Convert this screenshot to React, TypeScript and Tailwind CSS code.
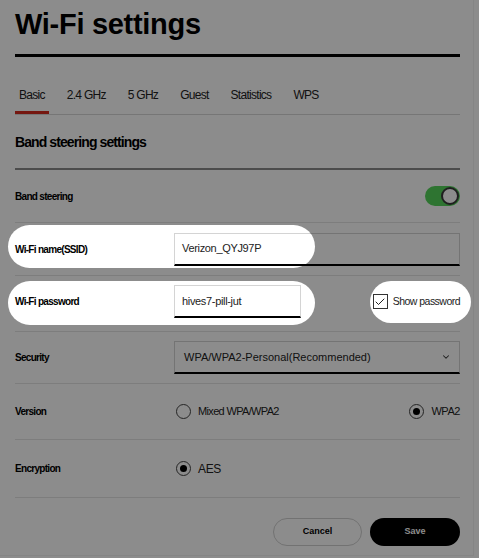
import React from 'react';
import { ChevronDown, Check } from 'lucide-react';

const font = { fontFamily: '"Liberation Sans", Arial, sans-serif' };

function Radio({ checked }: { checked?: boolean }) {
  return (
    <span className="flex h-[15px] w-[15px] shrink-0 items-center justify-center rounded-full border border-[#444]">
      {checked && <span className="h-[7px] w-[7px] rounded-full bg-black" />}
    </span>
  );
}

function Label({ children }: { children: React.ReactNode }) {
  return <div className="w-[159px] shrink-0 text-[10px] font-bold tracking-[-0.07em] text-black">{children}</div>;
}

export default function App() {
  const tabs = ['Basic', '2.4 GHz', '5 GHz', 'Guest', 'Statistics', 'WPS'];

  return (
    <div className="relative h-[558px] w-[479px] overflow-hidden bg-white" style={font}>
      <div className="h-[556px] w-[474px] border-r border-b border-[#f2f2f2] pl-[15px] pr-[13px]">
        <h1 className="pt-[7px] text-[29px] leading-[34px] font-bold tracking-[-0.01em] text-black">Wi-Fi settings</h1>
        <div className="mt-[13px] h-[3px] bg-black" />

        {/* Tabs */}
        <div className="mt-[31px] flex gap-[14px] border-b border-[#d8d8d8]">
          {tabs.map((t, i) => (
            <div
              key={t}
              className={`px-1 pb-[9px] text-[12px] leading-[14px] tracking-[-0.06em] text-[#222] ${i === 0 ? 'border-b-[3px] border-[#d52b1e]' : 'border-b-[3px] border-transparent'}`}
            >
              {t}
            </div>
          ))}
        </div>

        <h2 className="mt-[19px] text-[14px] leading-[16px] font-bold tracking-[-0.065em] text-black">Band steering settings</h2>
        <div className="mt-[18px] h-[2px] bg-[#8a8a8a]" />

        {/* Band steering */}
        <div className="flex h-[53px] items-center justify-between border-b border-[#e4e4e4]">
          <Label>Band steering</Label>
          <div className="flex h-[20px] w-[35px] items-center justify-end rounded-full bg-[#54d35a] pr-[1px]">
            <span className="h-[18px] w-[18px] rounded-full border-2 border-[#3a3a3a] bg-white" />
          </div>
        </div>

        {/* SSID */}
        <div className="flex h-[53px] items-center border-b border-[#e4e4e4]">
          <Label>Wi-Fi name(SSID)</Label>
          <div className="flex h-[33px] flex-1 items-center border border-[#d4d4d4] border-b-2 border-b-black px-[7px] text-[11px] tracking-[-0.03em] text-[#222]">
            Verizon_QYJ97P
          </div>
        </div>

        {/* Password */}
        <div className="flex h-[56px] items-center border-b border-[#e4e4e4] pb-[4px]">
          <Label>Wi-Fi password</Label>
          <div className="flex h-[33px] w-[127px] items-center border border-[#d4d4d4] border-b-2 border-b-black px-[7px] text-[11px] tracking-[-0.03em] text-[#222]">
            hives7-pill-jut
          </div>
          <div className="ml-auto flex items-center gap-[5px]">
            <span className="flex h-[15px] w-[15px] items-center justify-center border border-[#333] bg-white">
              <Check className="h-[12px] w-[12px] text-black" strokeWidth={1.75} />
            </span>
            <span className="text-[10.5px] tracking-[-0.05em] text-[#222]">Show password</span>
          </div>
        </div>

        {/* Security */}
        <div className="flex h-[52px] items-center border-b border-[#e4e4e4]">
          <Label>Security</Label>
          <div className="flex h-[33px] flex-1 items-center justify-between border border-[#d4d4d4] border-b-2 border-b-black pr-[8px] pl-[9px] text-[11px] text-[#222]">
            <span>WPA/WPA2-Personal(Recommended)</span>
            <ChevronDown className="h-[10px] w-[10px] text-[#333]" strokeWidth={2.5} />
          </div>
        </div>

        {/* Version */}
        <div className="flex h-[56px] items-center border-b border-[#e4e4e4]">
          <Label>Version</Label>
          <div className="ml-[2px] flex items-center gap-[7px]">
            <Radio />
            <span className="text-[11px] tracking-[-0.06em] text-[#222]">Mixed WPA/WPA2</span>
          </div>
          <div className="ml-auto flex items-center gap-[7px]">
            <Radio checked />
            <span className="text-[11px] tracking-[-0.04em] text-[#222]">WPA2</span>
          </div>
        </div>

        {/* Encryption */}
        <div className="flex h-[58px] items-center border-b border-[#e4e4e4]">
          <Label>Encryption</Label>
          <div className="ml-[2px] flex items-center gap-[7px]">
            <Radio checked />
            <span className="text-[12px] tracking-[-0.03em] text-[#222]">AES</span>
          </div>
        </div>

        {/* Buttons */}
        <div className="mt-[20px] flex justify-end gap-[8px]">
          <button className="h-[28px] w-[89px] rounded-full border border-[#d0d0d0] bg-white text-[9px] font-bold text-black">Cancel</button>
          <button className="h-[28px] w-[90px] rounded-full bg-black text-[9px] font-bold text-white">Save</button>
        </div>
      </div>

      {/* Spotlight overlay */}
      <svg className="pointer-events-none absolute inset-0" width="479" height="558">
        <defs>
          <mask id="spot">
            <rect x="0" y="0" width="479" height="558" fill="white" />
            <rect x="8" y="225" width="307" height="43" rx="21.5" fill="black" />
            <rect x="8" y="281" width="307" height="44" rx="22" fill="black" />
            <rect x="370" y="281" width="101" height="42" rx="21" fill="black" />
          </mask>
        </defs>
        <rect x="0" y="0" width="479" height="558" fill="black" fillOpacity="0.45" mask="url(#spot)" />
      </svg>
    </div>
  );
}
